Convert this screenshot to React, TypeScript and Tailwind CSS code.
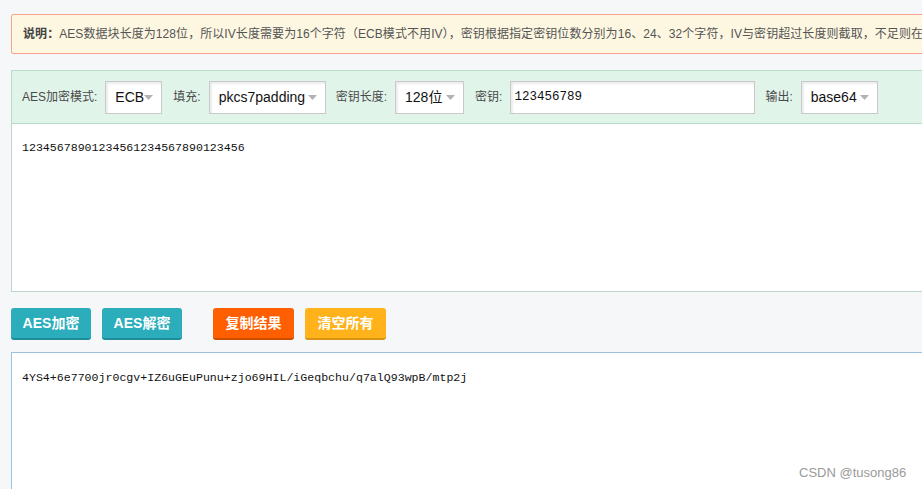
import React from "react";

const sans = { fontFamily: '"Liberation Sans", "Noto Sans CJK SC", sans-serif' };
const mono = { fontFamily: '"Liberation Mono", monospace' };

function Select({ value, width }: { value: string; width: string }) {
  return (
    <div
      className={`${width} h-[33px] flex items-center justify-between pl-[9px] pr-[8px] bg-white border border-[#c9c9c9] shadow-[inset_2px_2px_2px_rgba(0,0,0,0.08)] text-[14px] text-[#111]`}
    >
      <span>{value}</span>
      <svg width="9" height="5" viewBox="0 0 9 5">
        <path d="M0 0 L9 0 L4.5 5 Z" fill="#b3b3b3" />
      </svg>
    </div>
  );
}

function Label({ children }: { children: React.ReactNode }) {
  return <span className="text-[12px] text-[#4a4a4a] mr-[8px] whitespace-nowrap">{children}</span>;
}

const buttons = [
  { text: "AES加密", cls: "w-[80px] bg-[#2badbb] border-b-[#1f8d99] ml-0" },
  { text: "AES解密", cls: "w-[80px] bg-[#2badbb] border-b-[#1f8d99] ml-[11px]" },
  { text: "复制结果", cls: "w-[81px] bg-[#ff5f00] border-b-[#cc4c00] ml-[31px]" },
  { text: "清空所有", cls: "w-[81px] bg-[#ffb21a] border-b-[#d99414] ml-[11px]" },
];

export default function App() {
  return (
    <div className="relative w-[922px] h-[489px] overflow-hidden bg-[#f6f7f9]" style={sans}>
      <div className="w-[1100px] pl-[11px] pt-[14px]">
        {/* notice */}
        <div className="h-[40px] flex items-center pl-[11px] bg-[#fdf7e1] border border-[#f6a28e] rounded-[2px] text-[12px] tracking-[0.07px] text-[#555] whitespace-nowrap">
          <span className="font-bold text-[#444]">说明：</span>
          AES数据块长度为128位，所以IV长度需要为16个字符（ECB模式不用IV），密钥根据指定密钥位数分别为16、24、32个字符，IV与密钥超过长度则截取，不足则在
        </div>

        {/* settings bar */}
        <div className="mt-[16px] h-[54px] flex items-center pl-[10px] bg-[#e1f4ea] border border-[#b6dcc9]">
          <Label>AES加密模式:</Label>
          <Select value="ECB" width="w-[57px]" />
          <span className="w-[11px]" />
          <Label>填充:</Label>
          <Select value="pkcs7padding" width="w-[117px]" />
          <span className="w-[10px]" />
          <Label>密钥长度:</Label>
          <Select value="128位" width="w-[69px]" />
          <span className="w-[11px]" />
          <Label>密钥:</Label>
          <div
            className="w-[245px] h-[33px] flex items-center pl-[3px] bg-white border border-[#c9c9c9] shadow-[inset_2px_2px_2px_rgba(0,0,0,0.08)] text-[12.5px] text-[#111]"
            style={mono}
          >
            123456789
          </div>
          <span className="w-[10px]" />
          <Label>输出:</Label>
          <Select value="base64" width="w-[77px]" />
        </div>

        {/* input area */}
        <div className="h-[168px] bg-white border border-t-0 border-[#bcd7c9] pl-[10px] pt-[15px] text-[11.6px] text-[#111]" style={mono}>
          12345678901234561234567890123456
        </div>

        {/* buttons */}
        <div className="mt-[16px] flex">
          {buttons.map((b) => (
            <div
              key={b.text}
              className={`${b.cls} h-[32px] flex items-center justify-center rounded-[3px] border-b-2 text-white font-bold text-[14px]`}
            >
              {b.text}
            </div>
          ))}
        </div>

        {/* output area */}
        <div className="mt-[12px] h-[200px] bg-white border border-[#9cc2e2] pl-[10px] pt-[16px] text-[11.6px] text-[#111]" style={mono}>
          4YS4+6e7700jr0cgv+IZ6uGEuPunu+zjo69HIL/iGeqbchu/q7alQ93wpB/mtp2j
        </div>
      </div>

      <div className="absolute left-[799px] top-[463px] text-[13px] text-[#9a9a9a]">CSDN @tusong86</div>
    </div>
  );
}
